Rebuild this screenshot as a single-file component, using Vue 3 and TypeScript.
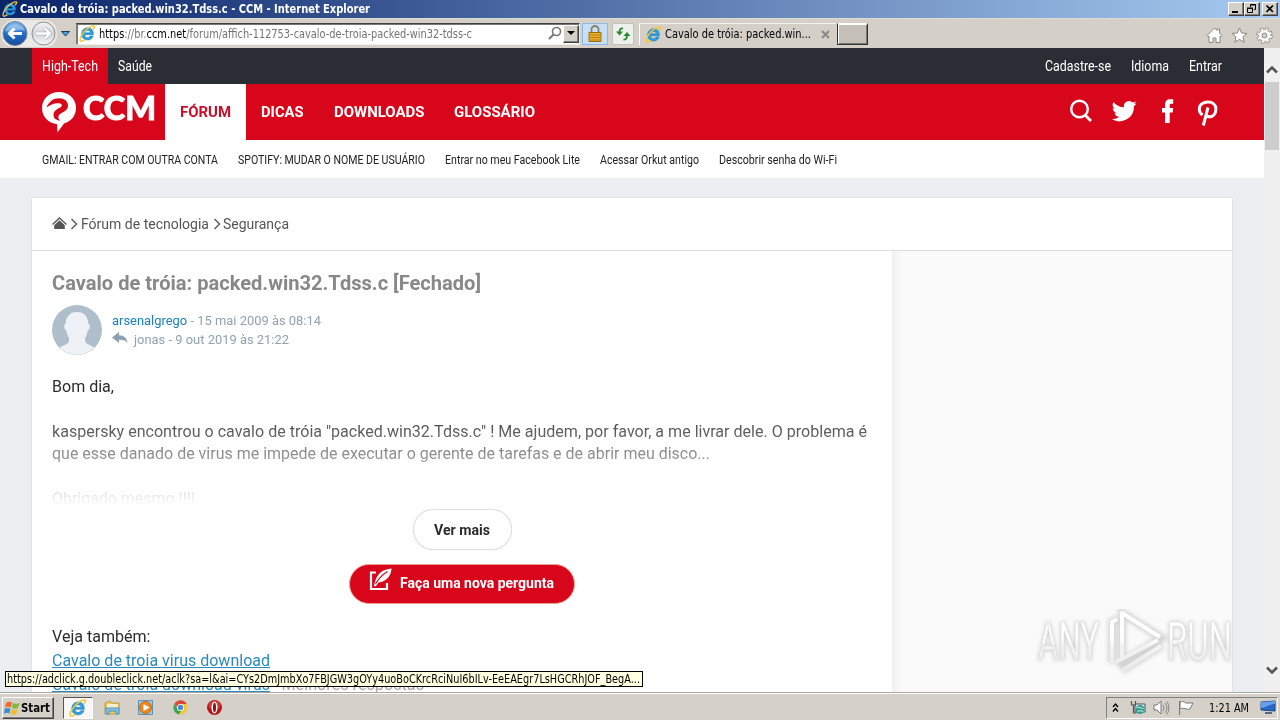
<script setup lang="ts">
import { ref } from 'vue'
import type { Directive } from 'vue'

// Sets a single line of text to a given measure by condensing or widening it.
const vFit: Directive<HTMLElement, number> = {
  mounted(el, binding) {
    const natural = el.getBoundingClientRect().width
    if (!natural) return
    el.style.transform = `scaleX(${binding.value / natural})`
    el.style.marginRight = `${binding.value - natural}px`
  },
}

interface Item {
  label: string
  width: number
}

const accountLinks: Item[] = [
  { label: 'Cadastre-se', width: 66 },
  { label: 'Idioma', width: 38 },
  { label: 'Entrar', width: 33 },
]
const sections: Item[] = [
  { label: 'FÓRUM', width: 51 },
  { label: 'DICAS', width: 42.500 },
  { label: 'DOWNLOADS', width: 90.500 },
  { label: 'GLOSSÁRIO', width: 81 },
]
const trends: Item[] = [
  { label: 'GMAIL: ENTRAR COM OUTRA CONTA', width: 176 },
  { label: 'SPOTIFY: MUDAR O NOME DE USUÁRIO', width: 187 },
  { label: 'Entrar no meu Facebook Lite', width: 135 },
  { label: 'Acessar Orkut antigo', width: 99 },
  { label: 'Descobrir senha do Wi-Fi', width: 118 },
]
const active = ref('FÓRUM')
</script>

<template>
  <div class="screen">
    <svg class="defs" width="0" height="0" aria-hidden="true">
      <defs>
        <linearGradient id="blue" x1="0" y1="0" x2="0" y2="1">
          <stop offset="0" stop-color="#79b9ee" />
          <stop offset="0.5" stop-color="#2170c5" />
          <stop offset="1" stop-color="#164c9e" />
        </linearGradient>
        <linearGradient id="silver" x1="0" y1="0" x2="0" y2="1">
          <stop offset="0" stop-color="#f4f4f5" />
          <stop offset="0.5" stop-color="#d3d5d9" />
          <stop offset="1" stop-color="#f5f6f7" />
        </linearGradient>
        <linearGradient id="frost" gradientUnits="userSpaceOnUse" x1="0" y1="0" x2="0" y2="62">
          <stop offset="0.45" stop-color="#fff" />
          <stop offset="0.6" stop-color="#f3f3f3" />
          <stop offset="1" stop-color="#eaeaea" />
        </linearGradient>
        <symbol id="ie" viewBox="0 0 16 16">
          <path d="M13.6 9.2H5.3c.1 3.3 4.1 3.5 5.1 1.2h2.900c-.8 2.300-2.600 3.700-5.100 3.700C4.600 14.100 2.500 11.900 2.500 8.500 2.500 5.200 4.800 2.700 8.200 2.700c3.700 0 5.500 2.700 5.400 6.500zM5.400 7.400h5.400C10.600 4.500 5.800 4.400 5.400 7.400z" fill="#2d9fe3" stroke="#1975b6" stroke-width=".5" />
          <path d="M12.800 4.300C15 2.400 15.500.500 13.400.800 10.600 1 5.300 4.800 2.700 9.200.700 12.600.300 15.600 2.500 15.200c1.100-.2 2.200-.9 3-1.600" fill="none" stroke="#efc53a" stroke-width="1.300" />
        </symbol>
      </defs>
    </svg>

    <header class="titlebar">
      <svg class="ie" width="16" height="16"><use href="#ie" /></svg>
      <span v-fit="350" class="fit">Cavalo de tróia: packed.win32.Tdss.c - CCM - Internet Explorer</span>
      <div class="window-buttons">
        <button aria-label="Minimizar"><svg width="14" height="12"><path d="M3 9h6" stroke="#000" stroke-width="2" /></svg></button>
        <button aria-label="Restaurar"><svg width="14" height="12"><path d="M5.500 4V1.500h5v5H9M5 2h6M2.500 5.500h5v4h-5zM2 5h6" fill="none" stroke="#000" /></svg></button>
        <button class="close" aria-label="Fechar"><svg width="14" height="12"><path d="M3.500 2.500l6.500 6.500M10 2.500L3.500 9" stroke="#000" stroke-width="1.700" /></svg></button>
      </div>
    </header>

    <div class="toolbar">
      <svg class="history" width="76" height="30" viewBox="0 0 76 30">
        <path d="M15 1h30c7 0 12 5 12 14s-5 13-12 13H15C6 28 1 22 1 15S6 1 15 1z" fill="#ebe9e6" />
        <circle cx="15" cy="14.500" r="12" fill="url(#blue)" stroke="#767f91" />
        <path d="M5 12c2-8 17-10 20 0-6-3-13 2-20 0z" fill="#fff" opacity=".35" />
        <path d="M22 14.500H9.500M14.500 9.500l-5 5 5 5" fill="none" stroke="#fff" stroke-width="3" />
        <circle cx="43.500" cy="14.500" r="11.500" fill="url(#silver)" stroke="#8b8e93" />
        <path d="M36 14.500h13.500M44.500 9l5.500 5.500-5.500 5.500" fill="none" stroke="#a5a8ad" stroke-width="3.600" />
        <path d="M36 14.500h13.500M44.500 9l5.500 5.500-5.500 5.500" fill="none" stroke="#fff" stroke-width="2.400" />
        <path d="M61.500 12.500h8L65.500 17z" fill="#46a2dc" stroke="#143b66" />
      </svg>
      <div class="address">
        <svg class="ie" width="17" height="17"><use href="#ie" /></svg>
        <span v-fit="373" class="fit url"><b>https</b>://br.<b>ccm.net</b>/forum/affich-112753-cavalo-de-troia-packed-win32-tdss-c</span>
        <svg class="search" width="15" height="15"><circle cx="9.500" cy="5.500" r="4" fill="none" stroke="#777" stroke-width="1.600" /><path d="M6.500 8.500L2 13" stroke="#777" stroke-width="2" /></svg>
        <span class="drop"><svg width="8" height="5"><path d="M0 0h8L4 4z" /></svg></span>
      </div>
      <span class="lock"><svg width="16" height="18"><path d="M4.500 8V4a3.500 3 0 0 1 7 0v4" fill="none" stroke="#8b8163" stroke-width="1.800" /><path d="M2 7.500h12v9H2z" fill="#eab42f" stroke="#9b6b12" /><path d="M3 10h10M3 12.500h10M3 15h10" stroke="#bc7c14" /></svg></span>
      <span class="refresh"><svg width="18" height="18"><path d="M9 3.500Q5.500 3 5.500 7" fill="none" stroke="#238a2b" stroke-width="1.800" /><path d="M2 6.500h7L5.500 10.500z" fill="#238a2b" /><path d="M9.500 14.500q3.500.5 3.500-4" fill="none" stroke="#238a2b" stroke-width="1.800" /><path d="M9.500 11h7L13 7z" fill="#238a2b" /></svg></span>
      <div class="tab">
        <svg width="17" height="17"><use href="#ie" /></svg>
        <span v-fit="146" class="fit">Cavalo de tróia: packed.win...</span>
        <svg class="tab-close" width="9" height="9"><path d="M1 1l7 7M8 1L1 8" stroke="#8b8883" stroke-width="2" /></svg>
      </div>
      <span class="new-tab"></span>
      <div class="tools">
        <svg width="17" height="17" viewBox="0 0 17 17"><path d="M1 8.500L8.500 1l2.500 2.500V2h2.500v4L16 8.500l-1 1.200-1-.7v6.500h-4V11H7v4.500H3V9l-1 .7z" fill="#fff" stroke="#8c8881" /></svg>
        <svg width="17" height="17" viewBox="0 0 17 17"><path d="M8.500 1l2.100 5 5.400.4-4.100 3.400 1.300 5.500-4.700-3-4.700 3 1.300-5.500L1 6.400 6.400 6z" fill="#fff" stroke="#8c8881" /></svg>
        <svg width="17" height="17" viewBox="0 0 17 17"><circle cx="8.500" cy="8.500" r="6.500" fill="none" stroke="#8c8881" stroke-width="3.500" stroke-dasharray="3 2.105" /><circle cx="8.500" cy="8.500" r="5.900" fill="#fff" stroke="#8c8881" stroke-width=".8" /><circle cx="8.500" cy="8.500" r="6.200" fill="none" stroke="#fff" stroke-width="2.500" stroke-dasharray="1.900 2.970" stroke-dashoffset="-.5" /><circle cx="8.500" cy="8.500" r="2.500" fill="#d4d0c8" stroke="#8c8881" /></svg>
      </div>
    </div>

    <div class="viewport">
      <div class="page">
        <nav class="network">
          <a class="current"><span v-fit="56" class="fit">High-Tech</span></a>
          <a><span v-fit="34" class="fit">Saúde</span></a>
          <div class="account">
            <a v-for="link in accountLinks" :key="link.label"><span v-fit="link.width" class="fit">{{ link.label }}</span></a>
          </div>
        </nav>

        <div class="masthead">
          <div class="logo">
            <svg width="36" height="42" viewBox="0 0 36 42">
              <path d="M17 1c9.500 0 17 6.500 17 15.800 0 8-5 13.800-12 15.700L15.500 41.500l-.6-8.500C6.500 32.200 0 26 0 17S7 1 17 1z" fill="#fff" />
              <path d="M4.500 16.500C7 10.500 11.500 7.300 17 7.300c5.500 0 9 3.200 9 7.200 0 4.300-3.500 6-6 7.300-2.500 1.400-3.800 2.300-3.600 4.700.1 1.300.8 2.300 1.800 3.200-4.200-.3-6.800-2.400-6.700-5.900.2-4 3.200-5.500 5.700-6.800 2-1 3-2 2.600-3.200-.5-1.500-2.800-1.900-5.300-1.500-3.500.5-7 2-10 4.200z" fill="#d7061b" />
            </svg>
            <span v-fit="73" class="fit">CCM</span>
          </div>
          <nav class="sections">
            <a v-for="section in sections" :key="section.label" :class="{ active: section.label === active }" @click="active = section.label"><span v-fit="section.width" class="fit">{{ section.label }}</span></a>
          </nav>
          <div class="social">
            <svg width="24" height="24"><circle cx="10.500" cy="10" r="8.300" fill="none" stroke="#fff" stroke-width="2.400" /><path d="M16.500 16.500l5.500 5.500" stroke="#fff" stroke-width="2.800" /></svg>
            <svg width="26" height="26" viewBox="0 0 24 24"><path d="M23.600 4.900c-.9.400-1.800.7-2.700.8a4.700 4.700 0 0 0 2.100-2.600c-1 .6-1.900.9-3 1.100A4.750 4.750 0 0 0 12 8.600C8 8.400 4.600 6.500 2.300 3.600a4.800 4.800 0 0 0 1.400 6.300c-.8 0-1.500-.2-2.100-.6 0 2.300 1.600 4.200 3.800 4.700-.7.200-1.400.2-2.100.1a4.700 4.700 0 0 0 4.400 3.300A9.500 9.500 0 0 1 .7 19.400a13.400 13.400 0 0 0 20.500-11.900c1-.7 1.800-1.600 2.400-2.600z" fill="#fff" /></svg>
            <svg class="facebook" width="14" height="26"><path d="M4 24V13.500H1V9h3V6C4 2.200 6 .2 9 .2h3.200V4.800h-2c-1.100 0-1.500.6-1.500 1.500V9h3.500l-.5 4.500h-3V24z" fill="#fff" /></svg>
            <svg class="pin" width="22" height="28"><path d="M5.500 15C3.300 13.500 2.300 11.800 2.300 9.200c0-4.500 3.700-7.300 8.600-7.300 4.700 0 8 2.900 8 7.100 0 4.600-2.700 7.800-6.100 7.800-2.100 0-3.400-.9-3.900-2.200M11 7.500L6.300 25.500" fill="none" stroke="#fff" stroke-width="3" /></svg>
          </div>
        </div>

        <nav class="trends">
          <a v-for="trend in trends" :key="trend.label"><span v-fit="trend.width" class="fit">{{ trend.label }}</span></a>
        </nav>

        <main class="card">
          <nav class="crumbs">
            <svg class="home" width="15" height="13"><path d="M.5 7.500l7-6.500 7 6.500" fill="none" stroke="#555" stroke-width="1.300" /><path d="M7.500 3.200l5.300 5V12H2.200V8.200z" fill="#555" /></svg>
            <svg class="chevron" width="8" height="12"><path d="M1.500 1l5 5-5 5" fill="none" stroke="#666" stroke-width="1.600" /></svg>
            <a><span v-fit="128" class="fit">Fórum de tecnologia</span></a>
            <svg class="chevron second" width="8" height="12"><path d="M1.500 1l5 5-5 5" fill="none" stroke="#666" stroke-width="1.600" /></svg>
            <a><span v-fit="66" class="fit">Segurança</span></a>
          </nav>
          <div class="columns">
            <article class="topic">
              <h1><span v-fit="429" class="fit">Cavalo de tróia: packed.win32.Tdss.c [Fechado]</span></h1>
              <div class="byline">
                <svg width="50" height="50" viewBox="0 0 50 50">
                  <circle cx="25" cy="25" r="25" fill="#afbecb" />
                  <path d="M25 7c7 0 11 4.500 11.500 12 2 .3 1.700 5-.8 7-.8 4-2 5.500-2.500 7.500-.3 3 .3 4.500 2.500 5.500l6.800 3.500A25 25 0 0 1 7.500 42.500L14.500 39c2.200-1 2.800-2.500 2.500-5.500-.5-2-1.900-3.500-2.700-7.500-2.500-2-2.800-6.700-.8-7C14 11.500 18 7 25 7z" fill="#eef2f6" />
                </svg>
                <div>
                  <p><span v-fit="209" class="fit"><a>arsenalgrego</a> - 15 mai 2009 às 08:14</span></p>
                  <p><svg width="16" height="12"><path d="M0 5.500L7 0v3.200c5 0 8 2.800 8.500 7.800C13.500 8.500 11 7.500 7 7.700V11z" fill="#8ba0b1" /></svg><span v-fit="155" class="fit">jonas - 9 out 2019 às 21:22</span></p>
                </div>
              </div>
              <div class="message">
                <p><span v-fit="62" class="fit">Bom dia,</span></p>
                <p><span v-fit="815" class="fit">kaspersky encontrou o cavalo de tróia "packed.win32.Tdss.c" ! Me ajudem, por favor, a me livrar dele. O problema é</span><br><span v-fit="658" class="fit">que esse danado de virus me impede de executar o gerente de tarefas e de abrir meu disco...</span></p>
                <p><span v-fit="143" class="fit">Obrigado mesmo !!!!</span></p>
              </div>
              <div class="actions">
                <button class="more"><span v-fit="56" class="fit">Ver mais</span></button>
                <button class="ask">
                  <svg width="23" height="23"><path d="M7 4.500H2v16.500h16v-6" fill="none" stroke="#fff" stroke-width="2.200" /><path d="M5 18.500C6.500 8 11 1.500 22.500.500 22 8 17.500 13.500 9.500 14.500L7 18z" fill="#fff" /><path d="M6.500 16C9 11.500 13 7 18.500 3.500" fill="none" stroke="#d7061b" stroke-width="1.100" /></svg>
                  <span v-fit="154" class="fit">Faça uma nova pergunta</span>
                </button>
              </div>
              <section class="related">
                <p><span v-fit="98.5" class="fit">Veja também:</span></p>
                <p><a><span v-fit="218" class="fit">Cavalo de troia virus download</span></a></p>
                <p><a><span v-fit="218" class="fit">Cavalo de troia download virus</span></a><em><span v-fit="151" class="fit">- Melhores respostas</span></em></p>
              </section>
            </article>
            <aside></aside>
          </div>
        </main>
      </div>

      <div class="scrollbar">
        <svg width="12" height="9"><path d="M1 7.500l5-5 5 5" fill="none" stroke="#555" stroke-width="2.600" /></svg>
        <span class="thumb"></span>
        <svg class="down" width="12" height="9"><path d="M1 1.500l5 5 5-5" fill="none" stroke="#555" stroke-width="2.600" /></svg>
      </div>

      <svg class="watermark" width="197" height="72" viewBox="0 0 197 72">
        <g class="mark-shadow">
          <path d="M77 54V13l5-3M87 50V4l40 25-45 27M87 61l40-25" />
        </g>
        <g class="mark-line">
          <path d="M77 54V13l5-3M87 50V4l38 24M87 40V5M123 31L79 54M88 61l38-24" />
          <text x="3" y="51" textLength="61" lengthAdjust="spacingAndGlyphs">ANY</text>
          <text x="132" y="51" textLength="65" lengthAdjust="spacingAndGlyphs">RUN</text>
        </g>
      </svg>
      <div class="status"><span v-fit="633" class="fit">https://adclick.g.doubleclick.net/aclk?sa=l&amp;ai=CYs2DmJmbXo7FBJGW3gOYy4uoBoCKrcRciNuI6bILv-EeEAEgr7LsHGCRhJOF_BegA...</span></div>
    </div>

    <footer class="taskbar">
      <button class="start">
        <svg width="17" height="16"><path d="M2 3c2-1.500 4-1.500 6-.5L6.800 7.500c-2-1-4-1-6 .3z" fill="#ef6a32" /><path d="M9 3c2 1 4 1 6.500 0L14 8c-2.200 1-4.200 1-6.200 0z" fill="#84b840" /><path d="M.5 9c2-1.300 4-1.300 6-.3L5.300 13.500c-2-1-3.500-1-5.300.3z" fill="#408bd4" /><path d="M7.500 9.200c2 1 4 1 6.200 0l-1.300 4.900c-2 1-4 1-6.100 0z" fill="#f1bc2e" /></svg>
        <span v-fit="29" class="fit">Start</span>
      </button>
      <span class="launcher selected"><svg width="18" height="18"><use href="#ie" /></svg></span>
      <span class="launcher"><svg width="18" height="17"><path d="M2 4l5-2 2 2h7v11H2z" fill="#e8c765" stroke="#bd9943" /><path d="M4 5h11v4H4z" fill="#f5f0cb" /><path d="M3 15V9h13v6h-3v-3H6v3z" fill="#83c2e5" stroke="#5594bc" /></svg></span>
      <span class="launcher"><svg width="18" height="17"><path d="M1.500 1.500h14v14h-14z" fill="#99c8e8" stroke="#5d92b8" /><circle cx="8.500" cy="8.500" r="6" fill="#ef881c" stroke="#c76811" /><path d="M6.500 5v7l6-3.500z" fill="#fff" /></svg></span>
      <span class="launcher"><svg width="18" height="17"><circle cx="9.500" cy="8.500" r="7" fill="#f6c637" /><path d="M3.400 5A7 7 0 0 1 15.700 5H9.500L6.500 9z" fill="#de4937" /><path d="M3.400 5l4 6.500 2.600.5-2 3.400A7 7 0 0 1 3.400 5z" fill="#39a457" /><circle cx="9.500" cy="8.500" r="3.500" fill="#fff" /><circle cx="9.500" cy="8.500" r="2.700" fill="#438bdf" /></svg></span>
      <span class="launcher"><svg width="18" height="17"><circle cx="9.500" cy="8.500" r="7.500" fill="#b8171c" /><ellipse cx="9.500" cy="6" rx="6" ry="4.500" fill="#e05b51" opacity=".55" /><ellipse cx="9.500" cy="8.500" rx="3" ry="6" fill="#fff" /><ellipse cx="9.500" cy="8.500" rx="1.500" ry="4.700" fill="#8f1216" /></svg></span>
      <div class="tray">
        <svg width="8" height="12"><path d="M1 5l2.500-3L6 5M1 9.500l2.500-3L6 9.500" fill="none" stroke="#000" stroke-width="1.400" /></svg>
        <svg class="net" width="17" height="16"><path d="M6 4h10v8H6z" fill="#ddebef" stroke="#405765" /><path d="M2.500 1v4h4V1M4.500 5v8h3" fill="none" stroke="#555" stroke-width="1.200" /><circle cx="11" cy="9.500" r="4.500" fill="#329c8c" /><path d="M7.500 8c3-3 4 2 7 0M8.500 12c2-3 4 0 6-1" fill="none" stroke="#a2e0c6" stroke-width="1.300" /></svg>
        <svg class="sound" width="17" height="16"><path d="M1 5h3l4-4v13l-4-4H1z" fill="#fff" stroke="#777" /><path d="M10 5q2 3 0 6M12 3q4 5 0 10M14 1.500q4 6.500 0 13" fill="none" stroke="#888" /></svg>
        <svg class="flag" width="17" height="16"><path d="M2.500 1v14M3 2c4-2 5 2 8 1h5l-3 6c-4 1-6-2-10 0z" fill="#fff" stroke="#777" /></svg>
        <span v-fit="40" class="fit clock">1:21 AM</span>
        <svg class="desktop" width="16" height="14"><path d="M1 2l14-1v10L1 10z" fill="#2867c3" stroke="#184883" /><path d="M1 2l14-1v3C9 4 6 8 1 8z" fill="#6b9eea" /><path d="M5 13h7" stroke="#566c86" stroke-width="2" /></svg>
      </div>
    </footer>
  </div>
</template>

<style>
html, body { margin: 0; overflow: hidden; background: #d5d0c8; }
</style>

<style scoped>
* { box-sizing: border-box; }
p, h1 { margin: 0; }
svg { display: block; flex: none; }
button { font: inherit; }
.screen { width: 1280px; height: 720px; display: flex; flex-direction: column; overflow: hidden; font-family: Roboto, "Liberation Sans", sans-serif; }
.defs { position: absolute; }
.fit { display: inline-block; flex: none; white-space: pre; transform-origin: left center; }
.titlebar, .toolbar, .status, .taskbar { font-family: "DejaVu Sans Condensed", "DejaVu Sans", sans-serif; font-size: 11.5px; }
.titlebar { height: 18px; flex: none; display: flex; align-items: center; padding: 0 2px; gap: 2px; color: #fff; font-weight: bold; background: linear-gradient(90deg, #0a246a, #a6caf0); }
.window-buttons { margin-left: auto; display: flex; }
.window-buttons button { width: 16px; height: 14px; padding: 0; border: 1px solid; border-color: #fff #404040 #404040 #fff; background: #d4d0c8; box-shadow: inset -1px -1px #808080; }
.window-buttons .close { margin-left: 2px; }

.toolbar { height: 30px; flex: none; display: flex; align-items: center; background: #d5d0c7; border-top: 1px solid #dfdbd6; }
.address { width: 504px; height: 22px; display: flex; align-items: center; background: #fff; border: 1px solid; border-color: #404040 #eee #eee #808080; box-shadow: inset 1px 1px #777; padding-left: 2px; }
.url { margin-left: 3px; color: #747474; }
.url b { font-weight: normal; color: #000; }
.search { margin-left: auto; margin-right: 1px; }
.drop { width: 16px; height: 18px; display: flex; align-items: center; justify-content: center; background: #d4d0c8; border: 1px solid; border-color: #fff #404040 #404040 #fff; box-shadow: inset -1px -1px #808080; }
.lock, .refresh { display: flex; align-items: center; justify-content: center; height: 22px; }
.lock { width: 26px; margin-left: 2px; background: #c6dff6; border: 1px solid #8cb9e5; }
.refresh { width: 22px; margin-left: 4px; background: #eef0ed; border: 1px solid #c3c2bf; border-radius: 2px; }
.tab { width: 197px; height: 22px; margin-left: 5px; padding-left: 5px; display: flex; align-items: center; border-left: 1px solid #fff; border-top: 1px solid #f3f1ed; }
.tab .fit { margin-left: 3px; }
.tab-close { margin-left: 10px; }
.new-tab { width: 31px; height: 22px; margin-left: 1px; border: 1px solid; border-color: #fff #333 #333; box-shadow: inset 1px 1px #fff, inset -1px -1px #777; background: #c4bfb7; }
.tools { margin-left: auto; margin-right: 7px; display: flex; gap: 8px; padding-top: 4px; }

.viewport { position: relative; flex: 1; min-height: 0; display: flex; overflow: hidden; }
.page { width: 1264px; overflow: hidden; background: #ebeff1; }
.network { height: 36px; display: flex; padding: 0 32px; background: #2a2d33; color: #fff; font-size: 14px; line-height: 36px; }
.network a { padding: 0 10px; }
.network .current { background: #d7061b; }
.account { margin-left: auto; display: flex; }
.masthead { height: 56px; display: flex; padding: 0 45px 0 42px; background: #d7061b; color: #fff; }
.logo { width: 123px; padding-top: 7px; display: flex; gap: 5px; }
.logo .fit { font: 900 33px/33px Lato, sans-serif; -webkit-text-stroke: 1px #fff; }
.sections { display: flex; font-weight: bold; font-size: 15px; line-height: 56px; }
.sections a { padding: 0 15px; }
.sections .active { background: #fff; color: #c9102a; }
.social { margin-left: auto; display: flex; align-items: center; gap: 23px; }
.social svg:nth-child(1), .social svg:nth-child(2) { margin-top: -2px; }
.social svg:nth-child(2) { margin-left: -5px; }
.facebook { margin-left: 1px; }
.pin { margin-top: 3px; margin-left: -1px; }
.trends { height: 38px; display: flex; gap: 20px; padding: 0 42px; background: #fff; font-size: 12px; line-height: 40px; color: #222; }

.card { width: 1200px; margin: 20px 32px 0; background: #fff; box-shadow: 0 0 2px #c9ced1; }
.crumbs { height: 53px; display: flex; align-items: center; padding: 0 20px; border-bottom: 1px solid #dcdcdc; color: #555; font-size: 14px; }
.home { margin-top: -2px; }
.chevron { margin: 0 3px; }
.chevron.second { margin: 0 2px 0 4px; }
.columns { display: flex; height: 460px; }
.topic { width: 860px; padding: 20px; }
h1 { height: 24px; font-size: 20px; line-height: 24px; color: #888; }
.byline { margin-top: 10px; display: flex; gap: 10px; color: #91a2b1; font-size: 13px; line-height: 19px; padding-bottom: 20px; }
.byline > div { padding-top: 6px; }
.byline p { display: flex; }
.byline p svg { margin: 2px 6px 0 0; }
.byline a { color: #1d81bb; }
.message { position: relative; height: 134px; padding-top: 1px; overflow: hidden; font-size: 16px; line-height: 22.4px; color: #2c2c2c; }
.message p { margin-bottom: 22.4px; }
.message::after { content: ""; position: absolute; inset: 34px 0 0; background: linear-gradient(rgba(255,255,255,0), #fff 97%); }
.message .fit, .related .fit { vertical-align: top; }
.actions { display: flex; flex-direction: column; align-items: center; gap: 14px; font-size: 14px; font-weight: bold; }
.more, .ask { display: flex; align-items: center; padding: 0 20px; border-radius: 21px; }
.more { width: 99px; height: 41px; border: 1px solid #e1e1e1; background: #fff; color: #2c2c2c; box-shadow: 0 0 1px #ccc; }
.ask { width: 226px; height: 40px; padding: 0 19px 2px; border: 1px solid #eba096; color: #fff; background: #d7061b; gap: 8px; }
.ask svg { margin-bottom: 7px; }
.related { margin-top: 21px; font-size: 16px; line-height: 24px; color: #2c2c2c; }
.related p { display: flex; }
.related a { color: #2b8abb; }
.related a .fit { text-decoration: underline; }
.related em { font-style: normal; color: #aaa; margin-left: 3px; }
aside { flex: 1; background: linear-gradient(90deg, #f0f0f0, #fafafa 10px); }
.scrollbar { width: 16px; display: flex; flex-direction: column; align-items: center; background: #f0f0f0; padding-top: 17px; }
.thumb { width: 14px; height: 68px; margin-top: 8px; background: #cdcdcd; }
.down { margin-top: auto; margin-bottom: 17px; }
.watermark { position: absolute; left: 1035px; top: 561px; }
.watermark text { font: 53px Roboto, sans-serif; fill: url(#frost); stroke: #dedede; stroke-width: .7; filter: drop-shadow(0 0 2px #c4c4c4); }
.mark-shadow { fill: none; stroke: #d4d4d4; stroke-width: 8; filter: blur(2px); }
.mark-line { fill: none; stroke: url(#frost); stroke-width: 4; stroke-linejoin: round; }
.status { position: absolute; left: 5px; bottom: 5px; width: 638px; height: 16px; padding-left: 1px; border: 1px solid #000; background: #ffffe1; color: #000; line-height: 14px; }

.taskbar { height: 28px; flex: none; display: flex; align-items: center; padding: 2px 2px 0; background: #d5d0c8; border-top: 1px solid #aaa6a0; box-shadow: inset 0 1px #fff; }
.start { width: 52px; height: 22px; display: flex; align-items: center; padding: 0 1px; font-weight: bold; color: #000; border: 1px solid; border-color: #fff #404040 #404040 #fff; background: #d5d0c8; box-shadow: inset -1px -1px #808080; }
.launcher { width: 30px; height: 22px; margin-right: 4px; display: flex; align-items: center; justify-content: center; }
.selected { margin-left: 9px; border: 1px solid; border-color: #555 #fff #fff #555; background: #f8f7f5; }
.tray { margin-left: auto; width: 172px; height: 22px; display: flex; align-items: center; padding-left: 5px; border: 1px solid; border-color: #808080 #fff #fff #808080; color: #000; }
.net { margin-left: 9px; }
.sound { margin-left: 7px; }
.flag { margin-left: 7px; }
.clock { margin-left: 15px; }
.desktop { margin-left: 11px; margin-top: -2px; }
</style>
